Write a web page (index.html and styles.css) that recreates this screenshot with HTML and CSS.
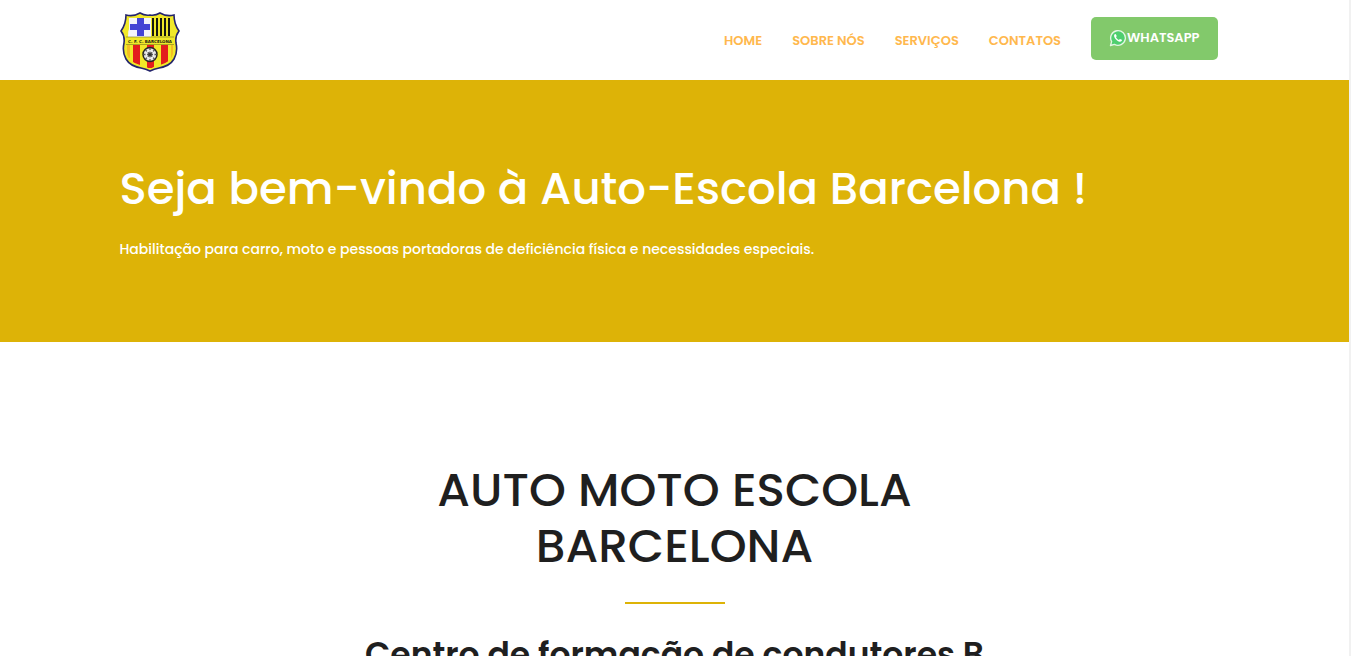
FILE: index.html
```html
<!DOCTYPE html>
<html lang="pt-BR">
<head>
<meta charset="utf-8">
<meta name="viewport" content="width=device-width, initial-scale=1">
<title>Auto-Escola Barcelona</title>
<link rel="stylesheet" href="styles.css">
</head>
<body>
<header class="header">
  <div class="container header-row">
    <a class="logo" href="#" aria-label="Auto-Escola Barcelona">
      <svg class="crest" viewBox="0 0 60 62" aria-hidden="true">
        <defs>
          <clipPath id="field"><path d="M9 7H51V18Q54 23 53 30V43Q51 51 40 54Q34 55 30 58Q26 55 20 54Q9 51 7 43V30Q6 23 9 18Z"/></clipPath>
        </defs>
        <path d="M6 4Q13 6 20 2Q25 5 30 4Q35 5 40 2Q47 6 54 4Q54 13 59 20Q55 25 56 32Q58 41 54 48Q50 55 39 57Q34 58 30 60Q26 58 21 57Q10 55 6 48Q2 41 4 32Q5 25 1 20Q6 13 6 4Z" fill="#f1e828" stroke="#24246c" stroke-width="1.600"/>
        <g clip-path="url(#field)">
          <path d="M9 7H31V26H8Z" fill="#f4f4fa"/>
          <path d="M17 7H24V13H30V19H24V25H17V19H10V13H17Z" fill="#4444d4"/>
          <path d="M33 7V25M37 7V25M41 7V25M45 7V25M49 7V25" stroke="#171710" stroke-width="2"/>
          <path d="M13 34H20V57H13ZM27 34H34V57H27ZM41 34H48V57H41Z" fill="#e31d1d"/>
          <path d="M7 34H10V47H7ZM51 34H54V47H51Z" fill="#f3bd23"/>
        </g>
        <path d="M6 26H54M6 33.500H54" stroke="#77771d" stroke-width=".6"/>
        <text class="crest-name" x="30" y="31.500" text-anchor="middle">C. F. C. BARCELONA</text>
        <circle cx="30" cy="43.500" r="7" fill="#e9e9e9" stroke="#262626" stroke-width="1.500"/>
        <path d="M30 37V50M23.500 43.500H36.500M25.500 39L34.500 48M34.500 39L25.500 48" stroke="#555" stroke-width="1.300"/>
        <circle cx="30" cy="43.500" r="3.800" fill="none" stroke="#eee" stroke-width="1.500"/>
        <circle cx="30" cy="43.500" r="1.500" fill="#333"/>
      </svg>
    </a>
    <nav class="nav" aria-label="Principal">
      <a class="nav-link" href="#home">HOME</a>
      <a class="nav-link" href="#sobre">SOBRE NÓS</a>
      <a class="nav-link" href="#servicos">SERVIÇOS</a>
      <a class="nav-link" href="#contatos">CONTATOS</a>
      <a class="whatsapp" href="#whatsapp">
        <svg class="whatsapp-icon" viewBox="0 0 24 24" aria-hidden="true">
          <path d="M2 22L3.500 16.800A9.800 9.800 0 1 1 7.200 20.500Z" fill="#4fcf6f" stroke="#e3f6e4" stroke-width="1.800" stroke-linejoin="round"/>
          <path d="M8.500 6.700C7.800 6.500 6.600 7.700 6.800 9.300C7.200 12.400 10.900 16.300 14.100 16.900C15.800 17.200 17.300 16.100 17.400 14.800C17.500 14.200 15.100 13.100 14.600 13.200C14.200 13.300 13.500 14.500 13.100 14.500C11.800 14.200 9.700 12.100 9.400 11C9.300 10.500 10.300 9.900 10.200 9.200C10.100 8.700 9.100 6.800 8.500 6.700Z" fill="#fff"/>
        </svg>WHATSAPP</a>
    </nav>
  </div>
</header>
<main>
  <section class="hero" id="home">
    <div class="container">
      <h1 class="hero-title">Seja bem-vindo à Auto-Escola Barcelona !</h1>
      <p class="hero-text">Habilitação para carro, moto e pessoas portadoras de deficiência física e necessidades especiais.</p>
    </div>
  </section>
  <section class="about" id="sobre">
    <h2 class="about-title">AUTO MOTO ESCOLA BARCELONA</h2>
    <hr class="divider">
    <h3 class="about-subtitle">Centro de formação de condutores B</h3>
  </section>
</main>
</body>
</html>
```
FILE: styles.css
```css
* { box-sizing: border-box; }

body {
  height: 100vh;
  margin: 0;
  overflow: hidden;
  border-right: 2px solid #f1f1f1;
  background: #fff;
  color: #1f1f1f;
  font-family: Poppins, Inter, "Open Sans", sans-serif;
}

h1, h2, h3, p { margin: 0; }
a { text-decoration: none; }

.container {
  max-width: 1140px;
  margin: 0 auto;
  padding: 0 15px;
}

.header-row {
  display: flex;
  align-items: center;
  justify-content: space-between;
  min-height: 80px;
  padding-right: 12px;
}

.logo { display: flex; padding-top: 4px; }
.crest { width: 60px; height: 62px; }
.crest-name {
  font-family: "DejaVu Sans", sans-serif;
  font-size: 4px;
  font-weight: 700;
  fill: #222210;
}

.nav {
  display: flex;
  align-items: center;
  gap: 30px;
  margin: 0 15px 3px 0;
}

.nav-link {
  padding-top: 5px;
  color: #ffb84d;
  font-size: 13px;
  font-weight: 600;
  line-height: 20px;
}

.whatsapp {
  display: flex;
  align-items: center;
  padding: 10px 18px 12px;
  border-radius: 5px;
  background: #82c96b;
  color: #fff;
  font-size: 13px;
  font-weight: 600;
  line-height: 21px;
}
.whatsapp-icon { width: 18px; height: 18px; }

.hero {
  padding: 80px 0;
  background: #ddb307;
  color: #fff;
}
.hero-title {
  font-size: 45px;
  font-weight: 500;
  line-height: 58px;
}
.hero-text {
  margin-top: 18px;
  font-size: 14px;
  font-weight: 500;
  line-height: 26px;
}

.about {
  max-width: 650px;
  margin: 0 auto;
  padding-top: 120px;
  text-align: center;
}
.about-title {
  max-width: 540px;
  margin: 0 auto;
  font-size: 47px;
  font-weight: 500;
  line-height: 56px;
}
.divider {
  width: 100px;
  height: 2px;
  margin: 28px auto;
  border: 0;
  background: #ddb307;
}
.about-subtitle {
  font-size: 33px;
  font-weight: 600;
  line-height: 46px;
}
```
